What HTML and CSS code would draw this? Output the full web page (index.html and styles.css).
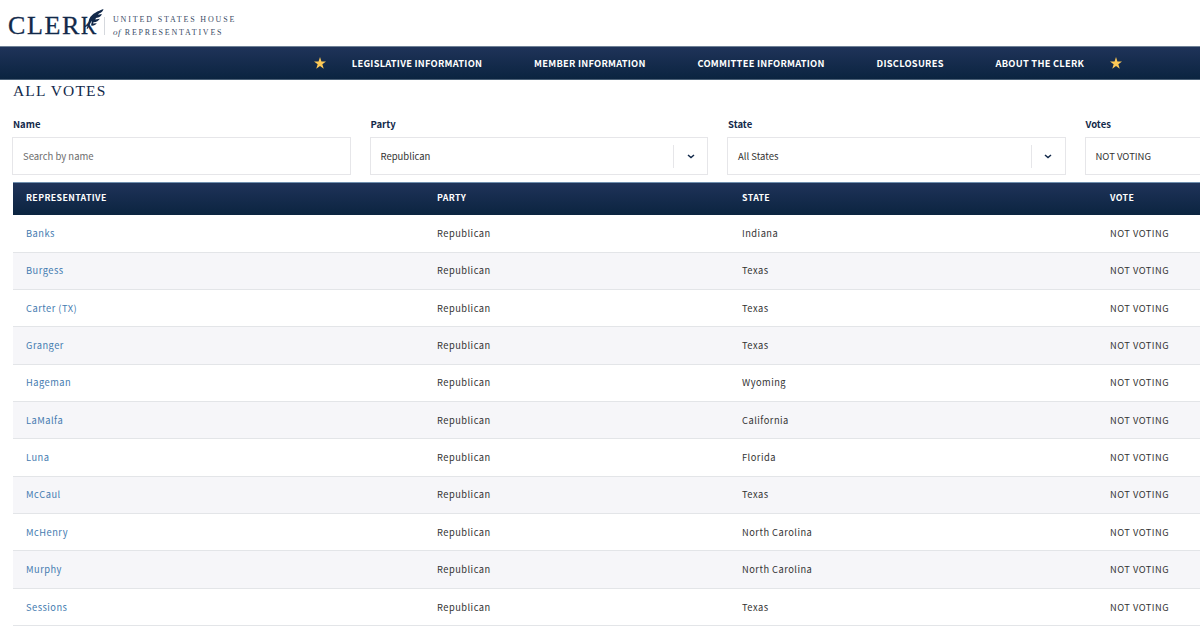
FILE: index.html
```html
<!DOCTYPE html>
<html lang="en">
<head>
    <meta charset="UTF-8">
    <title>Clerk, United States House of Representatives</title>
    <link rel="stylesheet" href="styles.css">
</head>
<body>
<div class="page">
    <header class="site-header">
        <div class="logo">
            <span class="logo-name">CLER<span class="logo-k">K</span></span>
            <svg class="feather" width="24" height="28" viewBox="0 0 24 28">
                <path class="feather-gap" d="M12 7 L20 5 L20 14 L15 19 L11.500 18.500 L9 15 Z"/>
                <path d="M21.500 1 C16 3 10 5.500 7.500 10.500 C6 14 7 16 4.500 20.500 L5.500 21 C7 18.500 8 15.500 10 12.500 L9 17.500 C11.500 18 13.500 17 14.800 15.200 L11 15.600 L11.500 14.200 C14.500 14.200 16.800 12.700 17.800 10.800 L13.300 11.500 L14 10 C17 9.500 19.300 8 19.900 5.900 L16 6.800 L17 5.500 C19.500 4.500 21 3 21.500 1 Z"/>
            </svg>
            <span class="logo-rule"></span>
            <div class="logo-text">
                <div class="logo-line1">UNITED STATES HOUSE</div>
                <div class="logo-line2"><em>of</em> REPRESENTATIVES</div>
            </div>
        </div>
    </header>

    <nav class="main-nav">
        <svg class="star" width="12" height="12" viewBox="0 0 24 24"><path d="M12 0l2.900 8.800H24l-7.300 5.500 2.800 9.200L12 18l-7.500 5.500 2.800-9.200L0 8.800h9.100z"/></svg>
        <ul>
            <li>LEGISLATIVE INFORMATION</li>
            <li>MEMBER INFORMATION</li>
            <li>COMMITTEE INFORMATION</li>
            <li>DISCLOSURES</li>
            <li>ABOUT THE CLERK</li>
        </ul>
        <svg class="star" width="12" height="12" viewBox="0 0 24 24"><path d="M12 0l2.900 8.800H24l-7.300 5.500 2.800 9.200L12 18l-7.500 5.500 2.800-9.200L0 8.800h9.100z"/></svg>
    </nav>

    <main>
        <h1>ALL VOTES</h1>

        <div class="filters">
            <div class="filter">
                <label>Name</label>
                <div class="field placeholder">Search by name</div>
            </div>
            <div class="filter">
                <label>Party</label>
                <div class="field select">Republican
                    <span class="arrow"><svg width="8" height="5" viewBox="0 0 8 5"><path d="M1 1l3 2.500L7 1"/></svg></span>
                </div>
            </div>
            <div class="filter">
                <label>State</label>
                <div class="field select">All States
                    <span class="arrow"><svg width="8" height="5" viewBox="0 0 8 5"><path d="M1 1l3 2.500L7 1"/></svg></span>
                </div>
            </div>
            <div class="filter">
                <label>Votes</label>
                <div class="field select">NOT VOTING
                    <span class="arrow"><svg width="8" height="5" viewBox="0 0 8 5"><path d="M1 1l3 2.500L7 1"/></svg></span>
                </div>
            </div>
        </div>

        <div class="votes">
            <div class="row head"><span>REPRESENTATIVE</span><span>PARTY</span><span>STATE</span><span>VOTE</span></div>
            <div class="row"><a>Banks</a><span>Republican</span><span>Indiana</span><span>NOT VOTING</span></div>
            <div class="row"><a>Burgess</a><span>Republican</span><span>Texas</span><span>NOT VOTING</span></div>
            <div class="row"><a>Carter (TX)</a><span>Republican</span><span>Texas</span><span>NOT VOTING</span></div>
            <div class="row"><a>Granger</a><span>Republican</span><span>Texas</span><span>NOT VOTING</span></div>
            <div class="row"><a>Hageman</a><span>Republican</span><span>Wyoming</span><span>NOT VOTING</span></div>
            <div class="row"><a>LaMalfa</a><span>Republican</span><span>California</span><span>NOT VOTING</span></div>
            <div class="row"><a>Luna</a><span>Republican</span><span>Florida</span><span>NOT VOTING</span></div>
            <div class="row"><a>McCaul</a><span>Republican</span><span>Texas</span><span>NOT VOTING</span></div>
            <div class="row"><a>McHenry</a><span>Republican</span><span>North Carolina</span><span>NOT VOTING</span></div>
            <div class="row"><a>Murphy</a><span>Republican</span><span>North Carolina</span><span>NOT VOTING</span></div>
            <div class="row"><a>Sessions</a><span>Republican</span><span>Texas</span><span>NOT VOTING</span></div>
        </div>
    </main>
</div>
</body>
</html>
```
FILE: styles.css
```css
* {
    box-sizing: border-box;
}
body {
    margin: 0;
    height: 637px;
    overflow: hidden;
    background: #fff;
    color: #333;
    font-family: "Noto Sans CJK SC", "Open Sans", sans-serif;
    font-size: 9.500px;
}
.page {
    width: 1436px;
}
.site-header {
    height: 46px;
    padding: 8px 0 0 8px;
}
.logo {
    display: flex;
    position: relative;
    color: #12294a;
    font-family: "Liberation Serif", serif;
}
.logo-name {
    width: 96px;
    font-size: 26px;
    line-height: 36px;
    letter-spacing: 1.6px;
    white-space: nowrap;
    -webkit-text-stroke: 0.3px #12294a;
}
.logo-k {
    display: inline-block;
    transform: scaleX(0.82);
    transform-origin: left;
}
.feather {
    position: absolute;
    left: 74px;
    top: 0;
    fill: #12294a;
}
.feather .feather-gap {
    fill: #fff;
}
.logo-rule {
    width: 1px;
    height: 18px;
    margin-top: 9px;
    background: #d5d8dd;
}
.logo-text {
    margin: 6px 0 0 8px;
    font-size: 8px;
    line-height: 12px;
    white-space: nowrap;
    color: #3a4b66;
}
.logo-line1 {
    letter-spacing: 1.840px;
}
.logo-line2 {
    letter-spacing: 1.780px;
}
.logo-line2 em {
    font-size: 9px;
    letter-spacing: 0.5px;
}
.main-nav {
    display: flex;
    justify-content: center;
    align-items: center;
    gap: 26px;
    height: 34px;
    border-top: 1px solid #6f8196;
    border-bottom: 1px solid #4b6076;
    background: linear-gradient(#1f3359, #0b2440);
}
.main-nav ul {
    display: flex;
    gap: 51.800px;
    margin: 0;
    padding: 0 0 1px;
    list-style: none;
    color: #fff;
    font-size: 9.300px;
    font-weight: bold;
    letter-spacing: 0.25px;
    white-space: nowrap;
}
.star {
    fill: #fdc956;
}
main {
    padding: 0 12px;
}
h1 {
    margin: 0 0 0 1px;
    padding-top: 1px;
    height: 37px;
    font-family: "Liberation Serif", serif;
    font-size: 15.500px;
    line-height: 20px;
    font-weight: normal;
    letter-spacing: 1.150px;
    color: #12294a;
}
.filters {
    display: grid;
    grid-template-columns: repeat(4, 338.500px);
    gap: 19px;
}
.filter label {
    display: block;
    height: 20px;
    padding-left: 1px;
    line-height: 15px;
    font-weight: bold;
    color: #12294a;
}
.field {
    display: flex;
    justify-content: space-between;
    align-items: center;
    height: 38px;
    padding-left: 10px;
    border: 1px solid #e6e6e9;
    line-height: 34px;
}
.placeholder {
    color: #6c6c6c;
}
.arrow {
    display: flex;
    justify-content: center;
    align-items: center;
    width: 34px;
    height: 23px;
    border-left: 1px solid #e6e6e9;
}
.arrow path {
    fill: none;
    stroke: #12294a;
    stroke-width: 1.5;
}
.votes {
    margin: 6.500px 0 0 1px;
}
.row {
    display: grid;
    grid-template-columns: 411px 305px 368px 1fr;
    align-items: center;
    height: 37.350px;
    padding-bottom: 1px;
    border-bottom: 1px solid #e3e5e8;
    font-size: 9.300px;
    letter-spacing: 0.480px;
}
.row > * {
    padding-left: 13px;
}
.row:nth-child(odd) {
    background: #f6f6f9;
}
.row a {
    color: #447bb0;
}
.row.head {
    height: 33.900px;
    padding-bottom: 2px;
    border-top: 1px solid #6f8fae;
    border-bottom: none;
    background: linear-gradient(#1f3359, #0b2440);
    color: #fff;
    font-size: 8.800px;
    font-weight: bold;
    letter-spacing: 0.370px;
}
```
